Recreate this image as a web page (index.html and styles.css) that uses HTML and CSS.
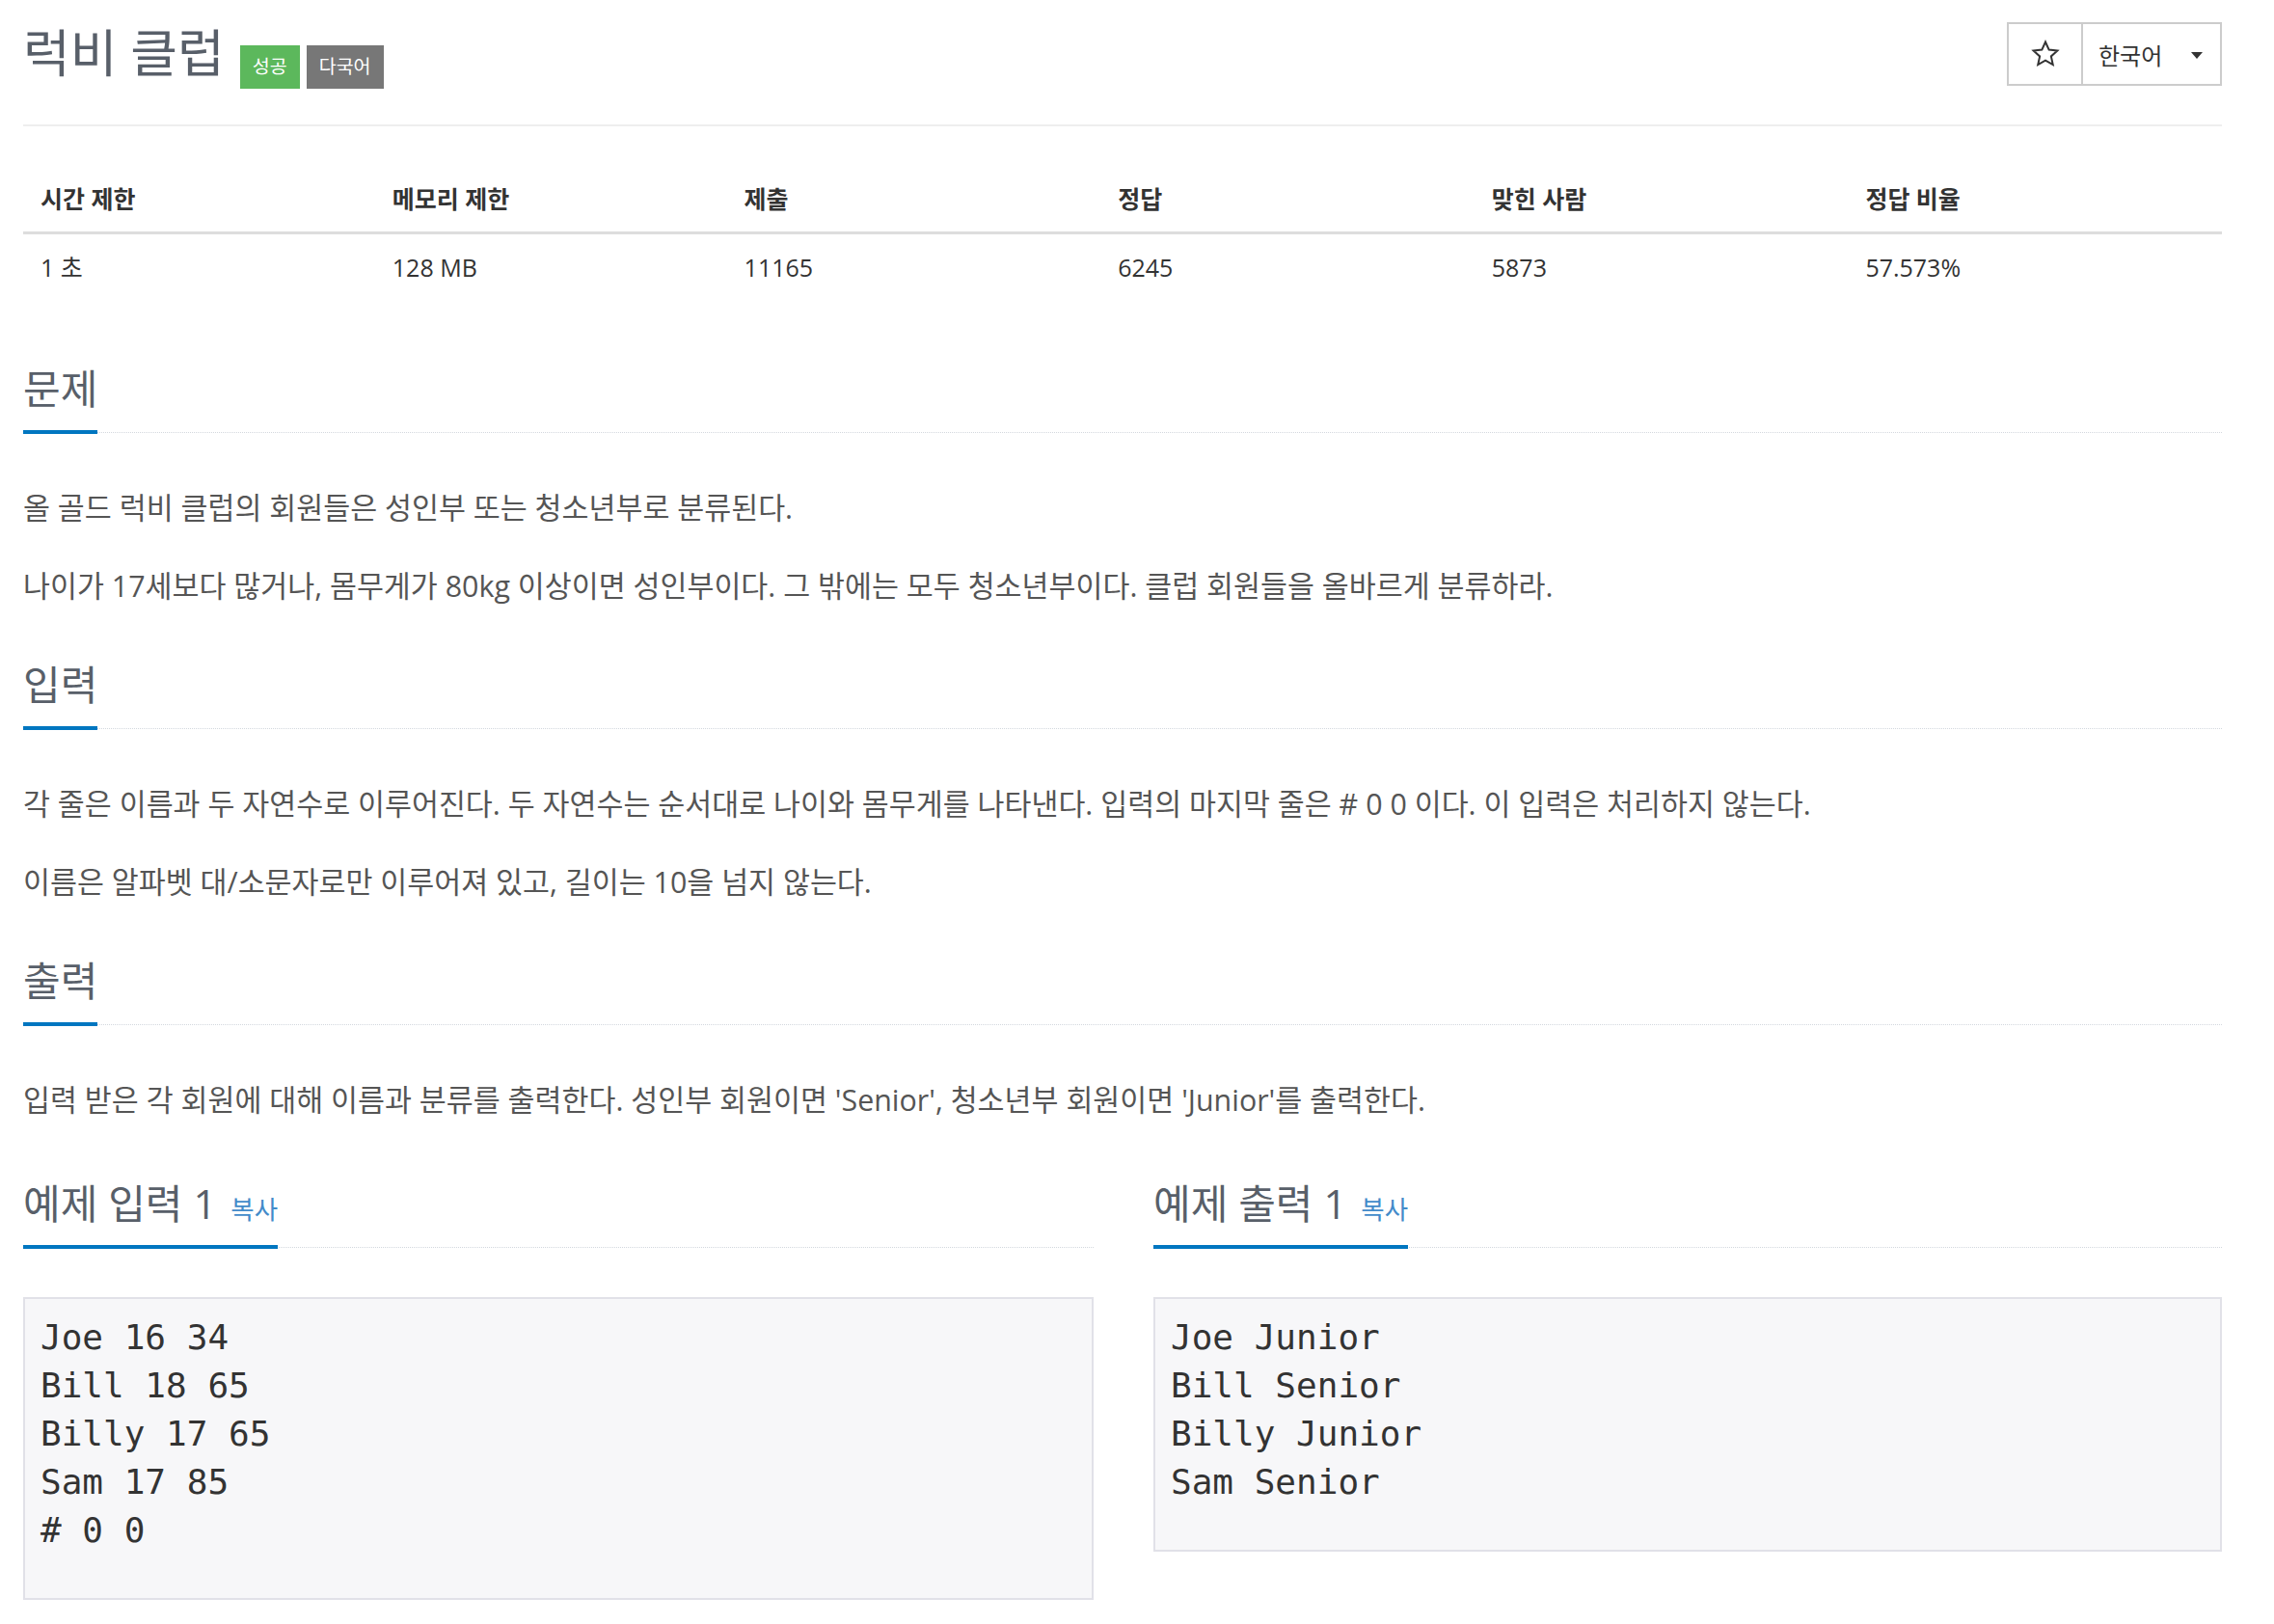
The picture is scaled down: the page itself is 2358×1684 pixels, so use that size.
FILE: index.html
```html
<!DOCTYPE html>
<html lang="ko">
<head>
<meta charset="utf-8">
<title>럭비 클럽</title>
<link rel="stylesheet" href="styles.css">
</head>
<body>
<div class="page">
  <header class="page-header">
    <h1 class="title">
      <span class="title-text">럭비 클럽</span>
      <span class="badge badge-success">성공</span>
      <span class="badge badge-gray">다국어</span>
    </h1>
    <div class="btn-group">
      <button class="btn btn-star" type="button">
        <svg width="32" height="32" viewBox="0 0 24 24" aria-hidden="true"><path d="M12 2.6l2.75 6.1 6.55.7-4.9 4.45 1.4 6.5L12 17.05l-5.8 3.3 1.4-6.5-4.9-4.45 6.55-.7z" fill="none" stroke="#333" stroke-width="1.5" stroke-linejoin="miter"/></svg>
      </button>
      <button class="btn btn-lang" type="button">
        <span>한국어</span>
        <span class="caret"></span>
      </button>
    </div>
  </header>

  <table class="info">
    <thead>
      <tr>
        <th class="w16">시간 제한</th>
        <th class="w16">메모리 제한</th>
        <th class="w17">제출</th>
        <th class="w17">정답</th>
        <th class="w17">맞힌 사람</th>
        <th class="w17">정답 비율</th>
      </tr>
    </thead>
    <tbody>
      <tr>
        <td>1 초 </td>
        <td>128 MB</td>
        <td>11165</td>
        <td>6245</td>
        <td>5873</td>
        <td>57.573%</td>
      </tr>
    </tbody>
  </table>

  <section class="section section-first">
    <div class="headline"><h2><span>문제</span></h2></div>
    <div class="text">
      <p>올 골드 럭비 클럽의 회원들은 성인부 또는 청소년부로 분류된다.</p>
      <p>나이가 17세보다 많거나, 몸무게가 80kg 이상이면 성인부이다. 그 밖에는 모두 청소년부이다. 클럽 회원들을 올바르게 분류하라.</p>
    </div>
  </section>

  <section class="section">
    <div class="headline"><h2><span>입력</span></h2></div>
    <div class="text">
      <p>각 줄은 이름과 두 자연수로 이루어진다. 두 자연수는 순서대로 나이와 몸무게를 나타낸다. 입력의 마지막 줄은 # 0 0 이다. 이 입력은 처리하지 않는다.</p>
      <p>이름은 알파벳 대/소문자로만 이루어져 있고, 길이는 10을 넘지 않는다.</p>
    </div>
  </section>

  <section class="section">
    <div class="headline"><h2><span>출력</span></h2></div>
    <div class="text">
      <p>입력 받은 각 회원에 대해 이름과 분류를 출력한다. 성인부 회원이면 'Senior', 청소년부 회원이면 'Junior'를 출력한다.</p>
    </div>
  </section>

  <div class="samples">
    <section class="sample">
      <div class="headline"><h2><span>예제 입력 1 <a class="copy" href="#">복사</a></span></h2></div>
      <pre class="sampledata">Joe 16 34
Bill 18 65
Billy 17 65
Sam 17 85
# 0 0</pre>
    </section>
    <section class="sample">
      <div class="headline"><h2><span>예제 출력 1 <a class="copy" href="#">복사</a></span></h2></div>
      <pre class="sampledata">Joe Junior
Bill Senior
Billy Junior
Sam Senior</pre>
    </section>
  </div>
</div>
</body>
</html>
```
FILE: styles.css
```css
* { box-sizing: border-box; }

html, body {
  margin: 0;
  padding: 0;
  background: #fff;
}

body {
  font-family: "Open Sans", "Noto Sans CJK KR", sans-serif;
  color: #555;
}

.page {
  width: 2280px;
  margin-left: 24px;
}

/* header */
.page-header {
  display: flex;
  justify-content: space-between;
  align-items: flex-start;
  padding: 23px 0 37px;
  border-bottom: 2px solid #eee;
}

.title {
  display: flex;
  align-items: flex-start;
  margin: 0;
  font-weight: 400;
}

.title-text {
  font-size: 53px;
  line-height: 64px;
  color: #585f69;
}

.badge {
  display: inline-block;
  margin-top: 24px;
  padding: 12px 13px 13px;
  font-size: 19.5px;
  line-height: 20px;
  color: #fff;
  font-weight: 400;
}

.badge-success {
  background: #5cb85c;
  margin-left: 16px;
}

.badge-gray {
  background: #777;
  margin-left: 7px;
}

.btn-group {
  display: flex;
}

.btn {
  display: flex;
  align-items: center;
  height: 66px;
  background: #fff;
  border: 2px solid #ccc;
  font-family: "Open Sans", "Noto Sans CJK KR", sans-serif;
  font-size: 24px;
  color: #333;
  padding: 0;
  margin: 0;
}

.btn-star {
  width: 79px;
  justify-content: center;
}

.btn-lang {
  width: 146px;
  margin-left: -2px;
  padding: 0 18px 0 16px;
  justify-content: space-between;
}

.caret {
  width: 0;
  height: 0;
  border-top: 7px solid #333;
  border-left: 6px solid transparent;
  border-right: 6px solid transparent;
  margin-top: 2px;
}

/* info table */
.info {
  width: 100%;
  border-collapse: collapse;
  margin-top: 41px;
  font-size: 25px;
  color: #333;
}

.info th,
.info td {
  text-align: left;
  padding: 17px 18px;
  line-height: 34px;
}

.info th {
  font-weight: 700;
  border-bottom: 3px solid #ddd;
}

.w16 { width: 16%; }
.w17 { width: 17%; }

/* sections */
.section {
  margin-top: 54px;
}

.section-first {
  margin-top: 67px;
}

.headline {
  border-bottom: 1px dotted #d3d8de;
}

.headline h2 {
  margin: 0;
  font-size: 42px;
  line-height: 50px;
  font-weight: 400;
  color: #585f69;
}

.headline h2 span {
  display: inline-block;
  padding-bottom: 18px;
  border-bottom: 4px solid #0076c0;
  margin-bottom: -2px;
}

.text {
  padding-top: 55px;
}

.text p {
  margin: 0 0 35px;
  font-size: 30.4px;
  line-height: 46px;
  color: #555;
}

.text p:last-child {
  margin-bottom: 0;
}

/* samples */
.samples {
  display: grid;
  grid-template-columns: 1110px 1108px;
  column-gap: 62px;
  align-items: start;
  margin-top: 59px;
}

.copy {
  font-size: 26.5px;
  line-height: 1;
  color: #428bca;
  text-decoration: none;
  margin-left: 4px;
}

.sampledata {
  margin: 51px 0 0;
  padding: 15px 16px 45px;
  background: #f7f7f9;
  border: 2px solid #e1e1e8;
  font-family: "DejaVu Sans Mono", "Liberation Mono", monospace;
  font-size: 36px;
  line-height: 50px;
  color: #333;
  white-space: pre;
}
```
